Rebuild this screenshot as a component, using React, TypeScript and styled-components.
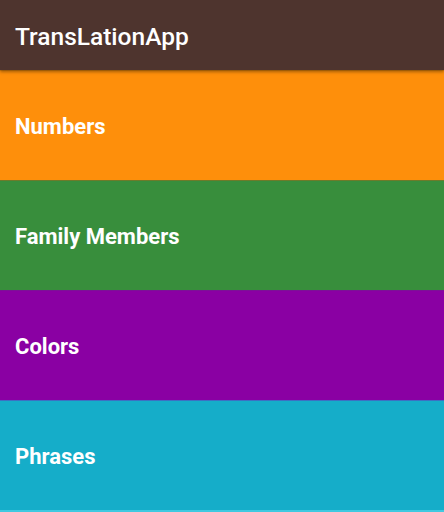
import styled, { createGlobalStyle } from 'styled-components';

const GlobalStyle = createGlobalStyle`
  html, body {
    margin: 0;
    padding: 0;
    background: #2fc4de;
  }
  body {
    font-family: Roboto, "Noto Sans", sans-serif;
  }
`;

const Screen = styled.div`
  width: 444px;
  height: 512px;
  display: flex;
  flex-direction: column;
  overflow: hidden;
  background: #3fc9e0;
`;

const AppBar = styled.header`
  height: 70px;
  flex-shrink: 0;
  display: flex;
  align-items: center;
  padding: 2px 15px 0;
  box-sizing: border-box;
  background: #4e342e;
  box-shadow: 0 2px 3px rgba(0, 0, 0, 0.35);
  position: relative;
  z-index: 1;
`;

const Title = styled.h1`
  margin: 0;
  font-size: 24.5px;
  font-weight: 500;
  color: #ffffff;
`;

const List = styled.div`
  display: flex;
  flex-direction: column;
`;

const Category = styled.div<{ $bg: string; $edge: string }>`
  height: 110px;
  flex-shrink: 0;
  display: flex;
  align-items: center;
  padding: 2px 15px 0;
  box-sizing: border-box;
  background: ${(p) => p.$bg};
  border-top: 1px solid ${(p) => p.$edge};
`;

const Label = styled.span`
  font-size: 22px;
  font-weight: 700;
  color: #ffffff;
`;

const categories = [
  { name: 'Numbers', bg: '#fe8f0b', edge: '#e08008' },
  { name: 'Family Members', bg: '#388e3c', edge: '#6e7a2a' },
  { name: 'Colors', bg: '#8a00a3', edge: '#7c1196' },
  { name: 'Phrases', bg: '#15adc9', edge: '#3d6fc3' },
];

export default function App() {
  return (
    <Screen>
      <GlobalStyle />
      <AppBar>
        <Title>TransLationApp</Title>
      </AppBar>
      <List>
        {categories.map((c) => (
          <Category key={c.name} $bg={c.bg} $edge={c.edge}>
            <Label>{c.name}</Label>
          </Category>
        ))}
      </List>
    </Screen>
  );
}
